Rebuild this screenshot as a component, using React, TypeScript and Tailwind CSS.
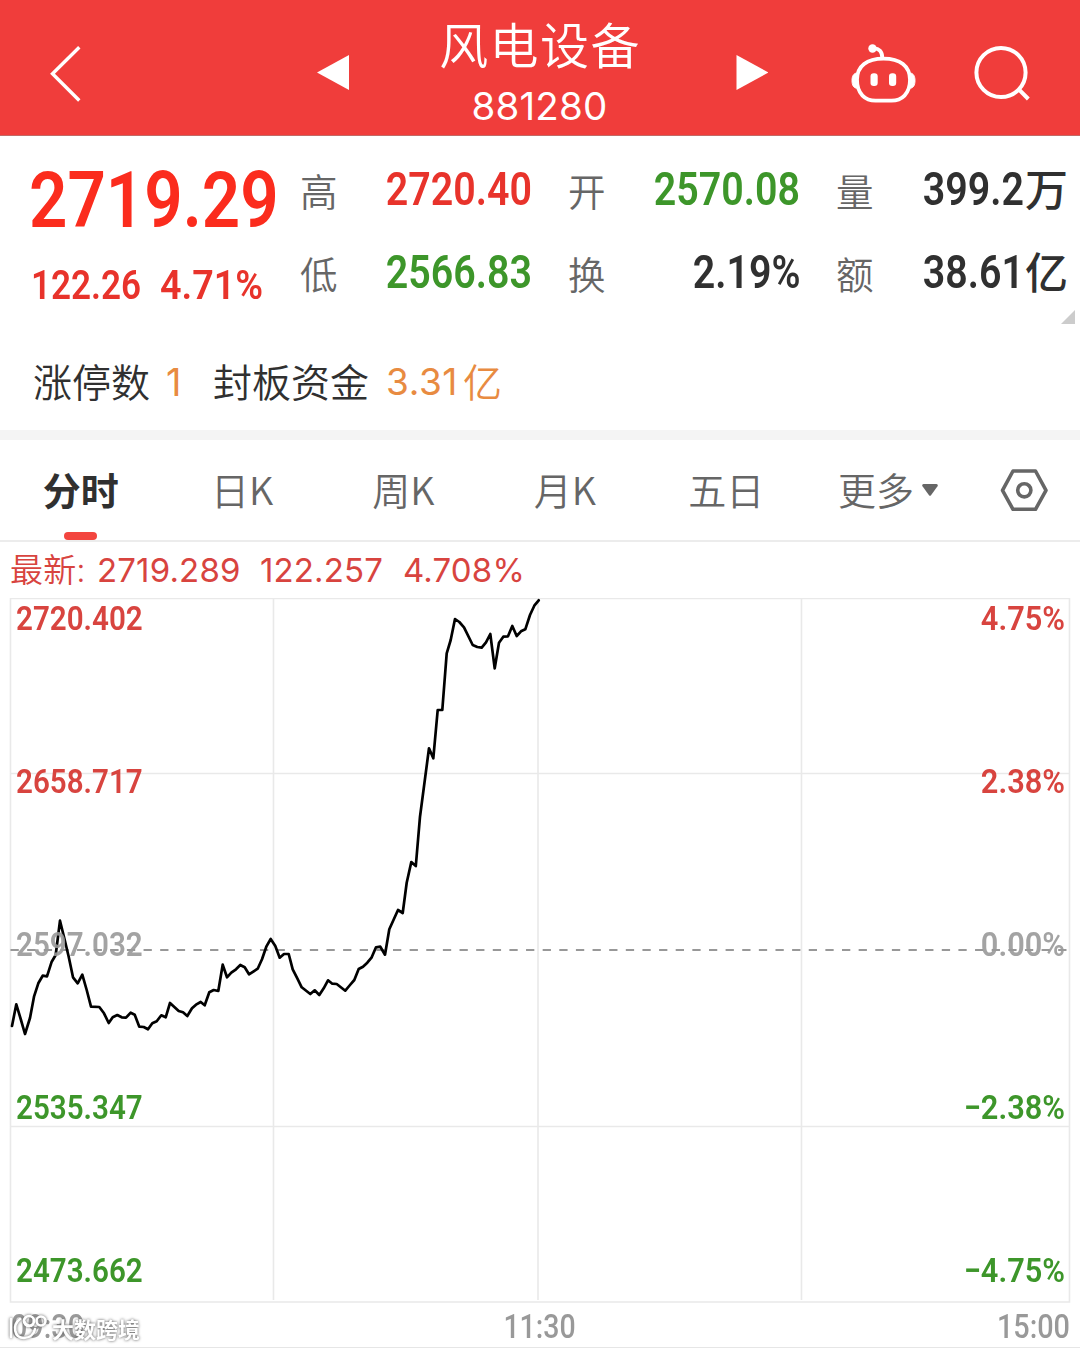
import React from 'react';

type Tone = 'up' | 'down' | 'plain';

interface Quote {
  label: string;
  value: string;
  unit?: string;
  tone: Tone;
}

const toneClass: { [key in Tone]: string } = {
  up: 'text-[#e8332b]',
  down: 'text-[#3d962a]',
  plain: 'text-[#303030]',
};

const quotes: Quote[] = [
  { label: '高', value: '2720.40', tone: 'up' },
  { label: '开', value: '2570.08', tone: 'down' },
  { label: '量', value: '399.2', unit: '万', tone: 'plain' },
  { label: '低', value: '2566.83', tone: 'down' },
  { label: '换', value: '2.19%', tone: 'plain' },
  { label: '额', value: '38.61', unit: '亿', tone: 'plain' },
];

const tabs = ['分时', '日K', '周K', '月K', '五日'];

const axis: { price: string; percent: string; color: string }[] = [
  { price: '2720.402', percent: '4.75%', color: 'text-[#d8443f]' },
  { price: '2658.717', percent: '2.38%', color: 'text-[#d8443f]' },
  { price: '2597.032', percent: '0.00%', color: 'text-[#999999]/90' },
  { price: '2535.347', percent: '−2.38%', color: 'text-[#3d962a]' },
  { price: '2473.662', percent: '−4.75%', color: 'text-[#3d962a]' },
];

const pricePoints = [
  '12,1026 16.3,1004.3 20.7,1019 25,1034 30,1018 34,996.7 38.3,983.3 42.7,975.7 47,976.3 51.7,961.7',
  '55.7,955 60,920.7 64.3,938.3 68.7,956.7 73,977.3 77.7,983.3 82.3,974.7 86.7,990 91,1006.7 99.3,1007',
  '104,1013.3 108.7,1023 112.7,1017.3 117.3,1015 121.7,1017.3 126,1017.7 130.7,1012.7 134.7,1014.7',
  '139.3,1026.7 143.7,1027 148,1029.3 152.3,1023.3 156.7,1021.3 161.3,1015.3 165.7,1017.3 170,1003',
  '178.7,1011 183,1012.3 187.3,1016 192,1008.3 196,1004.7 200.7,1002 204.7,1005.3 209.3,992.3 213.7,990',
  '218.3,991 222.7,964.7 227,977.3 231.3,972.7 236,969.3 240.3,965 244.7,967.3 249,974.3 257.7,968.7',
  '262,959.3 266.3,946.7 270.7,939 275.3,946 279.7,957.7 284,954 288.7,954 292.7,969.3 297.3,978.3',
  '301.7,987.3 310.3,994 314.7,990.3 319.3,995 323.7,988.3 328,980.3 332.3,983.7 336.7,984 345.3,990.7',
  '350,985 354.3,980 358.7,969 363,966.7 367.3,962.7 371.7,957.3 376,947.3 380.3,946.7 385,954.7',
  '389.3,929.3 398,910 402.7,913 406.7,882.7 411.3,862 415.8,866 420,816.7 429,748.3 433.3,758.3',
  '437.7,710 442.3,710 446.7,653.3 450.7,640 455,619 459.3,622 464,627.3 472.7,645 477.3,647 481.7,647.7',
  '486,642.3 490.3,634 494.7,668.3 499,642.7 503.3,636.7 508,636.3 512.3,626 516.7,636 521,631.3',
  '525.3,629.3 530,615 534.3,605.7 538.7,600.3',
].join(' ');

const Header: React.FC = () => (
  <header className="flex h-[136px] items-start border-b border-[#c26a66] bg-[#f03d3b] text-white">
    <svg className="ml-[46px] mt-[42px] h-16 w-10" viewBox="46 42 40 64" fill="none" stroke="currentColor" strokeWidth="3.4">
      <path d="M79.3 47.2 52.5 73.7 79.3 100.5" />
    </svg>
    <svg className="ml-[231px] mt-[54px] h-9 w-8" viewBox="317 54 32 36" fill="currentColor">
      <path d="M317 72.5 349 55V90z" />
    </svg>
    <div className="flex w-[387px] flex-col items-center">
      <h1 className="mt-[12px] pr-[5px] text-[49px] leading-[62px] tracking-[1.4px] font-[350]">风电设备</h1>
      <span className="mt-[11px] pr-[6px] font-['Inter','Liberation_Sans',sans-serif] text-[38.5px] leading-[42px] tracking-[.2px]">881280</span>
    </div>
    <svg className="mt-[54px] h-9 w-8" viewBox="736 54 32 36" fill="currentColor">
      <path d="M768.5 72.5 736.5 55V90z" />
    </svg>
    <svg className="ml-20 mt-10 h-[70px] w-[72px]" viewBox="848 40 72 70" fill="none" stroke="currentColor" strokeWidth="3.8">
      <path d="M883.5 58.6c16.5 0 26.5 7.4 26.5 21.2 0 14.2-8.5 20.9-18.5 20.9h-16c-10 0-18.5-6.7-18.5-20.9 0-13.8 10-21.2 26.500-21.2z" />
      <path d="M873 48.5c6-.5 9.3 3 9.3 9.5" />
      <circle cx="872.5" cy="48.5" r="4.2" fill="currentColor" stroke="none" />
      <path d="M856.5 73c-2.8.5-4.5 3-4.5 7.6s1.7 7.2 4.5 7.7zM910.5 73c2.8.5 4.5 3 4.5 7.6s-1.7 7.2-4.5 7.7z" fill="currentColor" strokeWidth="1" />
      <rect x="870.5" y="73.3" width="7.2" height="12.6" rx="3.2" fill="currentColor" stroke="none" />
      <rect x="889" y="73.3" width="7.2" height="12.6" rx="3.2" fill="currentColor" stroke="none" />
    </svg>
    <svg className="ml-[50px] mt-10 h-[70px] w-16" viewBox="970 40 64 70" fill="none" stroke="currentColor" strokeWidth="4">
      <circle cx="1001" cy="72.5" r="24.6" />
      <path d="M1018.3 88.8 1028.3 99" />
    </svg>
  </header>
);

const QuotePanel: React.FC = () => (
  <section className="relative h-[294px] bg-white">
    <div className="flex h-[200px]">
      <div className="w-[300px] pt-[25px] font-['Roboto','Noto_Sans_CJK_SC',sans-serif] font-semibold">
        <div className="ml-[29px] origin-left scale-x-[.862] text-[78px] leading-[80px] text-[#fb2c1d]">2719.29</div>
        <div className="mt-[19px] flex leading-[50px] text-[41px] text-[#e8332b]">
          <span className="ml-[31px] w-[129px] origin-left scale-x-[.855]">122.26</span>
          <span className="origin-left scale-x-[.92]">4.71%</span>
        </div>
      </div>
      <div className="grid grid-cols-[231px_231px_231px] content-start gap-x-[37px] pt-[13px]">
        {quotes.map((q) => (
          <div key={q.label} className="flex h-[83px] items-center justify-between">
            <span className="text-[37.5px] font-[350] text-[#666666]">{q.label}</span>
            <span className={`flex items-center font-medium ${toneClass[q.tone]}`}>
              <span className={`inline-block origin-right scale-x-[.865] font-['Roboto',sans-serif] text-[45.5px] font-semibold ${q.unit ? '' : 'relative left-px'}`}>{q.value}</span>
              {q.unit && <span className="relative -top-[3px] -mr-px ml-px text-[43px] leading-none">{q.unit}</span>}
            </span>
          </div>
        ))}
      </div>
    </div>
    <svg className="absolute right-[5px] top-[174px] h-[14px] w-[14px] text-[#cccccc]" viewBox="0 0 14 14" fill="currentColor">
      <path d="M14 0v14H0z" />
    </svg>
    <div className="flex items-center pl-[33px] pt-[14px] text-[39px] leading-[56px] text-[#303030] font-[350]">
      <span>涨停数</span>
      <span className="ml-4 w-[47px] pt-1 font-['Inter',sans-serif] text-[38px] font-normal text-[#e88b41]">1</span>
      <span>封板资金</span>
      <span className="ml-[17px] pt-1 font-['Inter',sans-serif] text-[37px] font-normal tracking-[.6px] text-[#e88b41]">3.31</span>
      <span className="ml-[5px] text-[#e88b41]">亿</span>
    </div>
  </section>
);

const TabBar: React.FC = () => (
  <nav className="flex h-[102px] border-b-2 border-[#ececec] bg-white text-[38px] text-[#666666]">
    {tabs.map((tab, i) => (
      <div key={tab} className="relative flex w-[161.4px] justify-center pt-[21px] leading-[56px]">
        <span className={i === 0 ? 'font-bold text-[#303030]' : 'font-[350]'}>{tab}</span>
        {i === 0 && <span className="absolute bottom-0 h-[8px] w-[33px] rounded-[4px] bg-[#f3453f]" />}
      </div>
    ))}
    <div className="ml-[31px] flex w-[102px] pt-[21px] leading-[56px] font-[350]">
      更多
      <svg className="ml-2 mt-[23px] h-3 w-4 shrink-0" viewBox="0 0 16 12" fill="currentColor">
        <path d="M1.5 0h13q2 .5 1 2.2L9 11.2q-1 1-2 0L.5 2.2Q-.5.5 1.5 0z" />
      </svg>
    </div>
    <svg className="ml-[60px] mt-[27px] h-[46px] w-12" viewBox="0 0 48 46" fill="none" stroke="currentColor" strokeWidth="3.6" strokeLinejoin="round">
      <path d="M13 4h22.5L46 23.3 35.5 42.3H13L2.5 23.3z" />
      <circle cx="24.3" cy="23.3" r="6.6" />
    </svg>
  </nav>
);

const Chart: React.FC = () => (
  <section className="bg-white">
    <div className="flex h-[56px] pl-[10px] pt-[6px] font-['Inter','Noto_Sans_CJK_SC',sans-serif] text-[33px] leading-[44px] tracking-[.15px] text-[#d8443f]">
      <span className="w-[87px] font-[350]">最新:</span>
      <span className="w-[163px]">2719.289</span>
      <span className="w-[143px]">122.257</span>
      <span>4.708%</span>
    </div>
    <div className="relative h-[705px]">
      <svg className="absolute inset-0 h-full w-full" viewBox="0 598 1080 705" fill="none">
        <path d="M10.5 598.5H1069.5V1302H10.5zM10.5 773.5H1069.5M10.5 1126.5H1069.5M273.5 598.5V1300M538 598.5V1300M801.5 598.5V1300" stroke="#e9e9e9" strokeWidth="1.6" />
        <path d="M10.5 950H1069.5" stroke="#777777" strokeWidth="1.4" strokeDasharray="8.3 8.33" />
        <polyline points={pricePoints} stroke="#000000" strokeWidth="2.7" strokeLinejoin="round" strokeLinecap="round" />
      </svg>
      <div className="relative flex h-[692px] flex-col justify-between pl-[16px] pr-[15px] font-['Roboto',sans-serif] text-[34px] font-semibold leading-[40px]">
        {axis.map((row) => (
          <div key={row.price} className={`flex justify-between ${row.color}`}>
            <span className="origin-left scale-x-[.87]">{row.price}</span>
            <span className="origin-right scale-x-[.905]">{row.percent}</span>
          </div>
        ))}
      </div>
    </div>
    <div className="relative flex h-[45px] justify-between border-b border-[#e6e6e6] pl-[11px] pr-[10px] pt-[4px] font-['Roboto',sans-serif] text-[33.5px] font-medium leading-[40px] text-[#999999]">
      <span className="w-[100px] origin-left scale-x-[.86]">09:30</span>
      <span className="relative -left-px scale-x-[.85]">11:30</span>
      <span className="flex w-[100px] origin-right scale-x-[.86] justify-end">15:00</span>
      <Watermark />
    </div>
  </section>
);

const Watermark: React.FC = () => (
  <div className="absolute left-[9px] top-[11px] flex items-center text-white drop-shadow-[0_0_1.5px_#555555]">
    <svg className="h-7 w-10" viewBox="0 0 40 28" fill="none" stroke="currentColor" strokeWidth="2.6" strokeLinecap="round">
      <path d="M2 5v18M11 5c-8 6-6 19 4 19 6 0 10-4 11-9" />
      <circle cx="20" cy="7" r="5" />
      <circle cx="32" cy="7" r="4.5" />
      <path d="M15 7c2 5 7 6 9 3" />
    </svg>
    <span className="ml-[3px] font-['Noto_Sans_CJK_SC',sans-serif] text-[22px] font-bold leading-7">大数跨境</span>
  </div>
);

const App: React.FC = () => (
  <div className="flex h-[1348px] w-[1080px] flex-col overflow-hidden bg-white font-['Noto_Sans_CJK_SC',sans-serif]">
    <Header />
    <QuotePanel />
    <div className="h-[10px] shrink-0 bg-[#f4f4f4]" />
    <TabBar />
    <Chart />
  </div>
);

export default App;
